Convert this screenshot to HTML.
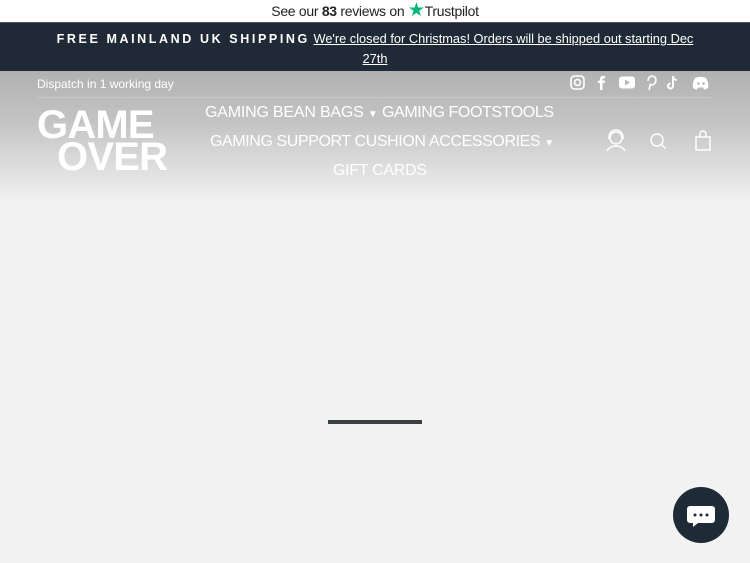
<!DOCTYPE html>
<html><head><meta charset="utf-8"><style>
*{margin:0;padding:0;box-sizing:border-box}
body{width:750px;height:563px;background:#f2f2f2;font-family:"Liberation Sans",sans-serif;overflow:hidden;position:relative}
.tp{height:22px;background:#fff;text-align:center;font-size:14px;line-height:22px;color:#222;letter-spacing:-0.3px}
.ann{height:49px;background:#202a37;color:#fff;text-align:center;font-size:13px;line-height:20px;padding-top:6px;border-top:1px solid #555}
.ann b{letter-spacing:2.6px;font-size:12.5px}
.ann u{font-size:12.8px}
.hdr{position:absolute;top:71px;left:0;width:750px;height:130px;background:linear-gradient(#b1b1b1,#c4c4c4 40%,#e2e2e2 80%,#f2f2f2)}
.w{color:#fff;position:absolute}
.nav{font-size:16px;color:#fff;position:absolute;white-space:nowrap;letter-spacing:-0.2px}
</style></head><body>
<div class="tp">See our <b>83</b> reviews on <span style="color:#00b67a;font-size:19px">★</span><span style="font-size:14px">Trustpilot</span></div>
<div class="ann"><b>FREE MAINLAND UK SHIPPING</b> <u>We're closed for Christmas! Orders will be shipped out starting Dec</u><br><u>27th</u></div>
<div class="hdr">
<div class="w" style="left:37px;top:6px;font-size:12px">Dispatch in 1 working day</div>
<div style="position:absolute;left:37px;top:26px;width:674px;height:1px;background:#c8c8c8"></div>
<svg style="position:absolute;left:570px;top:4px" width="142" height="16" fill="#fff">
<rect x="1" y="1" width="13" height="13" rx="3.5" fill="none" stroke="#fff" stroke-width="1.6"/><circle cx="7.5" cy="7.5" r="3" fill="none" stroke="#fff" stroke-width="1.6"/>
<path d="M30 15V8h-2V5.5h2V4c0-2 1-3 3-3h2v2.5h-1.5c-.7 0-1 .3-1 1V5.5h2.5L34.7 8H32.5v7z"/>
<rect x="49" y="1.5" width="16" height="12" rx="3"/><path d="M55 4.5v6l5-3z" fill="#b5b5b5"/>
<path d="M79 15l1.5-6M78 6c0-3 2-5 4-5s4 1.5 4 4-2 5-4 5c-1 0-2-.5-2-1.5" stroke="#fff" stroke-width="1.6" fill="none"/>
<path d="M103 1v10a2.5 2.5 0 1 1-2.5-2.5M103 1c0 2.5 2 4 4 4" stroke="#fff" stroke-width="2" fill="none"/>
<path d="M125 3c3-1.5 8-1.5 11 0 2 3 2.5 7 2 10-1.5 1-3 1.5-4 1.5l-1-2h-5l-1 2c-1 0-2.5-.5-4-1.5-.5-3 0-7 2-10z"/><circle cx="128.5" cy="8.5" r="1.3" fill="#b5b5b5"/><circle cx="133.5" cy="8.5" r="1.3" fill="#b5b5b5"/>
</svg>
<div class="w" style="left:37px;top:38px;font-size:40px;font-weight:bold;line-height:32px;letter-spacing:-0.8px">GAME<br><span style="margin-left:20px">OVER</span></div>
<div class="nav" style="left:205px;top:33px">GAMING BEAN BAGS <span style="font-size:10px">▼</span></div>
<div class="nav" style="left:382px;top:33px;letter-spacing:-0.4px">GAMING FOOTSTOOLS</div>
<div class="nav" style="left:210px;top:62px;letter-spacing:-0.4px">GAMING SUPPORT CUSHION</div>
<div class="nav" style="left:429px;top:62px;letter-spacing:-0.4px">ACCESSORIES <span style="font-size:10px">▼</span></div>
<div class="nav" style="left:333px;top:91px;letter-spacing:-0.3px">GIFT CARDS</div>
<svg style="position:absolute;left:604px;top:58px" width="110" height="24" fill="none" stroke="#fff" stroke-width="1.5">
<circle cx="12" cy="9" r="6"/><path d="M5 10V8a7 7 0 0 1 14 0v2M3 22c2-4 5-5 9-5s7 1 9 5"/>
<circle cx="53" cy="11" r="6"/><path d="M57.5 15.5l4 4"/>
<path d="M92 8h14v13H92zM96 8V5a3 3 0 0 1 6 0v3"/>
</svg>
</div>
<div style="position:absolute;left:328px;top:420px;width:94px;height:4px;background:#3b3e45"></div>
<div style="position:absolute;left:673px;top:487px;width:56px;height:56px;border-radius:50%;background:#1f2a37">
<svg width="56" height="56"><path d="M17 19h22a3 3 0 0 1 3 3v11a3 3 0 0 1-3 3H25l-5 4v-4h-3a3 3 0 0 1-3-3V22a3 3 0 0 1 3-3z" fill="#fff"/><circle cx="22" cy="28" r="1.5" fill="#1f2a37"/><circle cx="28" cy="28" r="1.5" fill="#1f2a37"/><circle cx="34" cy="28" r="1.5" fill="#1f2a37"/></svg>
</div>
</body></html>
